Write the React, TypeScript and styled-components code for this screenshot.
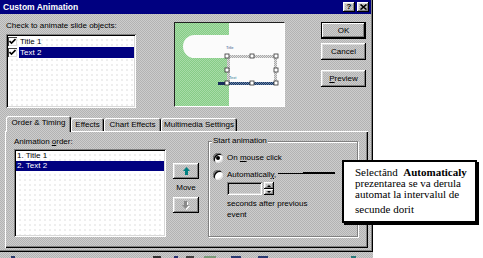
import React from "react";
import styled, { createGlobalStyle, css } from "styled-components";

const GlobalStyle = createGlobalStyle`
  html, body { margin: 0; padding: 0; background: #fff; }
  #root { width: 483px; height: 258px; overflow: hidden; }
  * { box-sizing: border-box; }
`;

const dither = css`
  background-color: #c0c0c0;
  background-image: repeating-conic-gradient(#cdcdcd 0 25%, #b3b3b3 0 50%);
  background-size: 2px 2px;
`;

const paper = css`
  background-color: #fff;
  background-image: radial-gradient(circle at 1px 1px, #dadada 0.6px, transparent 0.8px);
  background-size: 5px 5px;
`;

const raised = css`
  box-shadow: inset -1px -1px #000, inset 1px 1px #fff, inset -2px -2px #808080,
    inset 2px 2px #dcdcdc;
`;

const sunken = css`
  box-shadow: inset 1px 1px #808080, inset -1px -1px #fff, inset 2px 2px #000,
    inset -2px -2px #d8d8d8;
`;

const Page = styled.div`
  position: relative;
  width: 483px;
  height: 258px;
  display: flex;
  flex-direction: column;
  font-family: "Liberation Sans", Arial, sans-serif;
  font-size: 8px;
  color: #000;
`;

const Dialog = styled.div`
  ${dither};
  width: 373px;
  height: 252px;
  display: flex;
  flex-direction: column;
  box-shadow: inset -1px -1px #000, inset -2px -2px #808080;
`;

const TitleBar = styled.div`
  height: 14px;
  margin-right: 2px;
  padding: 0 2px 0 3px;
  background: #000080;
  color: #fff;
  display: flex;
  align-items: center;
`;

const Title = styled.div`
  flex: 1;
  font-weight: bold;
  font-size: 8.5px;
  line-height: 14px;
`;

const CaptionButton = styled.div`
  ${dither};
  ${raised};
  width: 12px;
  height: 10px;
  margin-left: 2px;
  display: flex;
  align-items: center;
  justify-content: center;
  color: #000;
  font-weight: bold;
  font-size: 8px;
  line-height: 10px;
`;

const TopRow = styled.div`
  margin-top: 7px;
  padding-left: 6px;
  display: flex;
  align-items: flex-start;
`;

const Column = styled.div<{ $w: number; $ml?: number; $mt?: number }>`
  width: ${(p) => p.$w}px;
  margin-left: ${(p) => p.$ml ?? 0}px;
  margin-top: ${(p) => p.$mt ?? 0}px;
  display: flex;
  flex-direction: column;
  flex: none;
`;

const Label = styled.div`
  line-height: 10px;
  height: 10px;
  white-space: nowrap;
`;

const Key = styled.span`
  text-decoration: underline;
`;

const ListBox = styled.div<{ $h: number; $mt: number }>`
  ${paper};
  ${sunken};
  height: ${(p) => p.$h}px;
  margin-top: ${(p) => p.$mt}px;
  padding: 2px;
  display: flex;
  flex-direction: column;
`;

const ObjectRow = styled.div`
  height: 11px;
  display: flex;
  align-items: center;
`;

const CheckBox = styled.span`
  width: 9px;
  height: 9px;
  flex: none;
  background: #fff;
  box-shadow: inset 1px 1px #404040, inset -1px -1px #dfdfdf;
  display: flex;
  align-items: center;
  justify-content: center;
`;

const ItemText = styled.span<{ $sel?: boolean; $ml?: number }>`
  flex: 1;
  margin-left: ${(p) => p.$ml ?? 0}px;
  padding-left: 1px;
  height: ${(p) => (p.$sel ? "100%" : "auto")};
  display: flex;
  align-items: center;
  background: ${(p) => (p.$sel ? "#000080" : "transparent")};
  color: ${(p) => (p.$sel ? "#fff" : "#000")};
  white-space: nowrap;
`;

const OrderRow = styled.div`
  height: 10px;
  display: flex;
  line-height: 10px;
`;

const PreviewFrame = styled.div`
  width: 111px;
  height: 85px;
  margin-left: 38px;
  margin-top: 1px;
  flex: none;
  border-left: 1px solid #202020;
  border-top: 1px solid #202020;
  border-right: 1px solid #fff;
  border-bottom: 1px solid #fff;
  display: flex;
`;

const PushButton = styled.div<{ $default?: boolean; $mt?: number }>`
  ${dither};
  ${raised};
  height: 17px;
  margin-top: ${(p) => p.$mt ?? 0}px;
  display: flex;
  align-items: center;
  justify-content: center;
  line-height: 10px;
  ${(p) =>
    p.$default &&
    css`
      box-shadow: inset 0 0 0 1px #000, inset -2px -2px #000, inset 2px 2px #fff,
        inset -3px -3px #808080;
    `}
`;

const TabStrip = styled.div`
  margin-top: 8px;
  height: 15px;
  padding-left: 6px;
  display: flex;
  align-items: flex-end;
`;

const Tab = styled.div<{ $w: number; $active?: boolean }>`
  ${dither};
  position: relative;
  z-index: ${(p) => (p.$active ? 2 : 1)};
  width: ${(p) => p.$w}px;
  height: ${(p) => (p.$active ? 16 : 13)}px;
  margin-bottom: ${(p) => (p.$active ? -1 : 0)}px;
  padding-bottom: ${(p) => (p.$active ? 2 : 0)}px;
  border-radius: 2px 2px 0 0;
  box-shadow: inset 1px 1px #fff, inset -1px 0 #000, inset -2px 0 #808080;
  display: flex;
  align-items: center;
  justify-content: center;
  line-height: 10px;
  white-space: nowrap;
`;

const Panel = styled.div`
  margin-left: 5px;
  width: 363px;
  height: 117px;
  padding: 6px 0 0 9px;
  display: flex;
  align-items: flex-start;
  box-shadow: inset 1px 1px #fff, inset -1px -1px #000, inset -2px -2px #808080;
`;

const MoveColumn = styled.div`
  width: 26px;
  margin-left: 7px;
  padding-top: 26px;
  display: flex;
  flex-direction: column;
  align-items: center;
  flex: none;
`;

const ArrowButton = styled.div<{ $mt?: number }>`
  ${dither};
  ${raised};
  width: 26px;
  height: 16px;
  margin-top: ${(p) => p.$mt ?? 0}px;
  display: flex;
  align-items: center;
  justify-content: center;
`;

const MoveLabel = styled.div`
  margin-top: 4px;
  line-height: 10px;
`;

const GroupBox = styled.div`
  position: relative;
  width: 150px;
  height: 96px;
  margin-left: 9px;
  margin-top: 4px;
  padding: 10px 0 0 4px;
  border: 1px solid #808080;
  box-shadow: inset 1px 1px #fff, 1px 1px #fff;
  flex: none;
`;

const Legend = styled.span`
  ${dither};
  position: absolute;
  top: -6px;
  left: 3px;
  padding: 0 1px;
  line-height: 10px;
  white-space: nowrap;
`;

const RadioRow = styled.div<{ $mt?: number }>`
  height: 11px;
  margin-top: ${(p) => p.$mt ?? 0}px;
  display: flex;
  align-items: center;
  white-space: nowrap;
`;

const RadioText = styled.span`
  white-space: pre;
  line-height: 10px;
`;

const Radio = styled.span<{ $on?: boolean }>`
  width: 10px;
  height: 10px;
  margin-right: 4px;
  flex: none;
  border-radius: 50%;
  background: #fff;
  box-shadow: inset 1px 1px #808080, inset -1px -1px #e0e0e0, inset 2px 2px #000;
  display: flex;
  align-items: center;
  justify-content: center;
  &::after {
    content: "";
    width: 4px;
    height: 4px;
    border-radius: 50%;
    background: ${(p) => (p.$on ? "#000" : "transparent")};
  }
`;

const SpinRow = styled.div`
  margin-top: 2px;
  margin-left: 14px;
  height: 13px;
  display: flex;
`;

const SpinInput = styled.div`
  ${dither};
  ${sunken};
  width: 35px;
  height: 13px;
`;

const SpinButtons = styled.div`
  width: 10px;
  margin-left: 2px;
  display: flex;
  flex-direction: column;
`;

const SpinHalf = styled.div<{ $h: number; $down?: boolean }>`
  ${dither};
  ${raised};
  height: ${(p) => p.$h}px;
  display: flex;
  align-items: center;
  justify-content: center;
  &::after {
    content: "";
    border-left: 2px solid transparent;
    border-right: 2px solid transparent;
    ${(p) =>
      p.$down ? "border-top: 2px solid #000;" : "border-bottom: 2px solid #000;"}
  }
`;

const Note = styled.div`
  margin-top: 3px;
  margin-left: 14px;
  line-height: 11px;
`;

const Strip = styled.div`
  ${dither};
  width: 373px;
  height: 6px;
  display: flex;
  align-items: flex-end;
`;

const StripMark = styled.span<{ $ml: number; $w: number; $c: string }>`
  margin-left: ${(p) => p.$ml}px;
  width: ${(p) => p.$w}px;
  height: 2px;
  background: ${(p) => p.$c};
  flex: none;
`;

const Leader = styled.div<{ $x: number; $y: number; $w: number; $h: number }>`
  position: absolute;
  left: ${(p) => p.$x}px;
  top: ${(p) => p.$y}px;
  width: ${(p) => p.$w}px;
  height: ${(p) => p.$h}px;
  background: #000;
`;

const Callout = styled.div`
  position: absolute;
  left: 342px;
  top: 160px;
  width: 135px;
  height: 63px;
  background: #fff;
  border: 2px solid #000;
  box-shadow: 2px 2px 0 #000;
  padding: 5px 0 0 11px;
  font-family: "Liberation Serif", "Times New Roman", serif;
  font-size: 11px;
  line-height: 11px;
  color: #000;
`;

const CalloutLine = styled.div<{ $mt?: number }>`
  margin-top: ${(p) => p.$mt ?? 0}px;
  white-space: pre;
`;

const Check = () => (
  <svg width="7" height="7" viewBox="0 0 7 7">
    <path d="M0.5 3 L2.5 5 L6.5 1" stroke="#000" strokeWidth="1.6" fill="none" />
  </svg>
);

const CloseGlyph = () => (
  <svg width="7" height="6" viewBox="0 0 7 6">
    <path d="M0.5 0.5 L6.5 5.5 M6.5 0.5 L0.5 5.5" stroke="#000" strokeWidth="1.6" />
  </svg>
);

const UpArrow = () => (
  <svg width="7" height="8" viewBox="0 0 7 8">
    <polygon points="3.5,0 7,4 5,4 5,8 2,8 2,4 0,4" fill="#008080" />
  </svg>
);

const DownArrowDisabled = () => (
  <svg width="8" height="9" viewBox="0 0 8 9">
    <polygon points="4.5,9 8,5 6,5 6,1 3,1 3,5 1,5" fill="#fff" />
    <polygon points="3.5,8 7,4 5,4 5,0 2,0 2,4 0,4" fill="#8a8a8a" />
  </svg>
);

const SlidePreview = () => (
  <svg width="109" height="83" viewBox="0 0 109 83">
    <defs>
      <pattern id="grn" width="2" height="2" patternUnits="userSpaceOnUse">
        <rect width="2" height="2" fill="#86cc86" />
        <rect width="1" height="1" fill="#a8dca8" />
        <rect x="1" y="1" width="1" height="1" fill="#a8dca8" />
      </pattern>
      <pattern id="hatch" width="2" height="2" patternUnits="userSpaceOnUse">
        <rect width="2" height="2" fill="#a8a8a8" />
        <rect width="1" height="1" fill="#e0e0e0" />
        <rect x="1" y="1" width="1" height="1" fill="#e0e0e0" />
      </pattern>
      <pattern id="navy" width="2" height="2" patternUnits="userSpaceOnUse">
        <rect width="2" height="2" fill="#1e3566" />
        <rect width="1" height="1" fill="#6a8aa8" />
        <rect x="1" y="1" width="1" height="1" fill="#6a8aa8" />
      </pattern>
    </defs>
    <rect x="0" y="0" width="54" height="83" fill="url(#grn)" />
    <rect x="54" y="0" width="55" height="83" fill="#fbfbfb" />
    <path d="M54.5 12 H19.5 A11.5 11.5 0 0 0 19.5 35 H54.5 Z" fill="#fbfbfb" />
    <text x="51" y="26" fontSize="4" fill="#34558a" fontFamily="Liberation Sans, sans-serif">
      Title
    </text>
    <rect x="52" y="32" width="50" height="3" fill="url(#hatch)" />
    <rect x="52" y="32" width="3" height="29" fill="url(#hatch)" />
    <rect x="99" y="32" width="3" height="29" fill="url(#hatch)" />
    <text x="54" y="56" fontSize="4" fill="#2a7c96" fontFamily="Liberation Sans, sans-serif">
      Text
    </text>
    <rect x="43" y="59" width="10" height="3" fill="#162c5c" />
    <rect x="53" y="59" width="49" height="3" fill="url(#navy)" />
    {[
      [52, 33],
      [77, 33],
      [101, 33],
      [52, 47],
      [101, 47],
      [52, 60],
      [77, 60],
      [101, 60],
    ].map(([x, y], i) => (
      <rect
        key={i}
        x={x - 2}
        y={y - 2}
        width="4"
        height="4"
        fill="#fff"
        stroke="#333"
        strokeWidth="0.8"
      />
    ))}
  </svg>
);

const OBJECTS = [
  { label: "Title 1", selected: false },
  { label: "Text 2", selected: true },
];

const ORDER = [
  { label: "1. Title 1", selected: false },
  { label: "2. Text 2", selected: true },
];

const TABS = [
  { label: "Order & Timing", w: 65, active: true },
  { label: "Effects", w: 33, active: false },
  { label: "Chart Effects", w: 57, active: false },
  { label: "Multimedia Settings", w: 76, active: false },
];

const STRIP_MARKS = [
  { ml: 11, w: 4, c: "#2a3a6a" },
  { ml: 138, w: 8, c: "#303030" },
  { ml: 13, w: 4, c: "#2a3070" },
  { ml: 8, w: 8, c: "#404040" },
  { ml: 10, w: 12, c: "#7a9a7a" },
  { ml: 15, w: 10, c: "#2a3a70" },
  { ml: 17, w: 10, c: "#2a3a70" },
  { ml: 83, w: 5, c: "#2a7a7a" },
];

export default function App() {
  return (
    <>
      <GlobalStyle />
      <Page>
        <Dialog>
          <TitleBar>
            <Title>Custom Animation</Title>
            <CaptionButton>?</CaptionButton>
            <CaptionButton>
              <CloseGlyph />
            </CaptionButton>
          </TitleBar>

          <TopRow>
            <Column $w={130}>
              <Label>Check to animate slide objects:</Label>
              <ListBox $h={74} $mt={3}>
                {OBJECTS.map((o) => (
                  <ObjectRow key={o.label}>
                    <CheckBox>
                      <Check />
                    </CheckBox>
                    <ItemText $sel={o.selected} $ml={2}>
                      {o.label}
                    </ItemText>
                  </ObjectRow>
                ))}
              </ListBox>
            </Column>

            <PreviewFrame>
              <SlidePreview />
            </PreviewFrame>

            <Column $w={45} $ml={36} $mt={1}>
              <PushButton $default>OK</PushButton>
              <PushButton $mt={4}>Cancel</PushButton>
              <PushButton $mt={10}>
                <span>
                  <Key>P</Key>review
                </span>
              </PushButton>
            </Column>
          </TopRow>

          <TabStrip>
            {TABS.map((t) => (
              <Tab key={t.label} $w={t.w} $active={t.active}>
                {t.label}
              </Tab>
            ))}
          </TabStrip>

          <Panel>
            <Column $w={152}>
              <Label>
                Animation <Key>o</Key>rder:
              </Label>
              <ListBox $h={88} $mt={2}>
                {ORDER.map((o) => (
                  <OrderRow key={o.label}>
                    <ItemText $sel={o.selected}>{o.label}</ItemText>
                  </OrderRow>
                ))}
              </ListBox>
            </Column>

            <MoveColumn>
              <ArrowButton>
                <UpArrow />
              </ArrowButton>
              <MoveLabel>Move</MoveLabel>
              <ArrowButton $mt={4}>
                <DownArrowDisabled />
              </ArrowButton>
            </MoveColumn>

            <GroupBox>
              <Legend>Start animation</Legend>
              <RadioRow>
                <Radio $on />
                <RadioText>
                  On <Key>m</Key>ouse click
                </RadioText>
              </RadioRow>
              <RadioRow $mt={6}>
                <Radio />
                <RadioText>
                  Automaticall<Key>y</Key>,
                </RadioText>
              </RadioRow>
              <SpinRow>
                <SpinInput />
                <SpinButtons>
                  <SpinHalf $h={7} />
                  <SpinHalf $h={6} $down />
                </SpinButtons>
              </SpinRow>
              <Note>
                seconds after previous
                <br />
                event
              </Note>
            </GroupBox>
          </Panel>
        </Dialog>

        <Strip>
          {STRIP_MARKS.map((m, i) => (
            <StripMark key={i} $ml={m.ml} $w={m.w} $c={m.c} />
          ))}
        </Strip>

        <Leader $x={278} $y={173} $w={25} $h={1} />
        <Leader $x={303} $y={172} $w={32} $h={2} />

        <Callout>
          <CalloutLine>
            {"Selectând  "}
            <b>Automaticaly</b>
          </CalloutLine>
          <CalloutLine>prezentarea se va derula</CalloutLine>
          <CalloutLine>automat la intervalul de</CalloutLine>
          <CalloutLine $mt={4}>secunde dorit</CalloutLine>
        </Callout>
      </Page>
    </>
  );
}
